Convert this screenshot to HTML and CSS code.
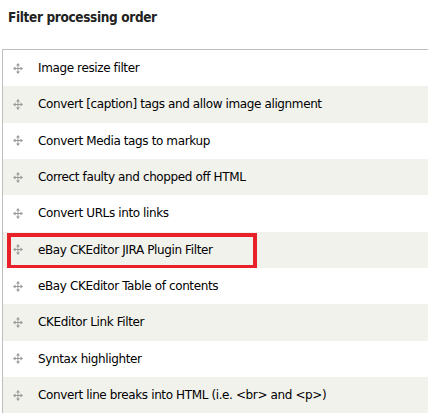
FILE: index.html
```html
<!DOCTYPE html>
<html>
<head>
<meta charset="utf-8">
<link rel="stylesheet" href="styles.css">
</head>
<body>
<h2 class="title">Filter processing order</h2>
<div class="table">
  <div class="row"><span class="handle"><svg width="10" height="11" viewBox="0 0 10 11"><path d="M5 0 L7 2.5 H5.5 V5 H7.5 V3.5 L10 5.5 L7.5 7.5 V6 H5.5 V8.5 H7 L5 11 L3 8.5 H4.5 V6 H2.5 V7.5 L0 5.5 L2.5 3.5 V5 H4.5 V2.5 H3 Z" fill="#999"/></svg></span><span class="label">Image resize filter</span></div>
  <div class="row odd"><span class="handle"><svg width="10" height="11" viewBox="0 0 10 11"><path d="M5 0 L7 2.5 H5.5 V5 H7.5 V3.5 L10 5.5 L7.5 7.5 V6 H5.5 V8.5 H7 L5 11 L3 8.5 H4.5 V6 H2.5 V7.5 L0 5.5 L2.5 3.5 V5 H4.5 V2.5 H3 Z" fill="#999"/></svg></span><span class="label">Convert [caption] tags and allow image alignment</span></div>
  <div class="row"><span class="handle"><svg width="10" height="11" viewBox="0 0 10 11"><path d="M5 0 L7 2.5 H5.5 V5 H7.5 V3.5 L10 5.5 L7.5 7.5 V6 H5.5 V8.5 H7 L5 11 L3 8.5 H4.5 V6 H2.5 V7.5 L0 5.5 L2.5 3.5 V5 H4.5 V2.5 H3 Z" fill="#999"/></svg></span><span class="label">Convert Media tags to markup</span></div>
  <div class="row odd"><span class="handle"><svg width="10" height="11" viewBox="0 0 10 11"><path d="M5 0 L7 2.5 H5.5 V5 H7.5 V3.5 L10 5.5 L7.5 7.5 V6 H5.5 V8.5 H7 L5 11 L3 8.5 H4.5 V6 H2.5 V7.5 L0 5.5 L2.5 3.5 V5 H4.5 V2.5 H3 Z" fill="#999"/></svg></span><span class="label">Correct faulty and chopped off HTML</span></div>
  <div class="row"><span class="handle"><svg width="10" height="11" viewBox="0 0 10 11"><path d="M5 0 L7 2.5 H5.5 V5 H7.5 V3.5 L10 5.5 L7.5 7.5 V6 H5.5 V8.5 H7 L5 11 L3 8.5 H4.5 V6 H2.5 V7.5 L0 5.5 L2.5 3.5 V5 H4.5 V2.5 H3 Z" fill="#999"/></svg></span><span class="label">Convert URLs into links</span></div>
  <div class="row odd"><span class="handle"><svg width="10" height="11" viewBox="0 0 10 11"><path d="M5 0 L7 2.5 H5.5 V5 H7.5 V3.5 L10 5.5 L7.5 7.5 V6 H5.5 V8.5 H7 L5 11 L3 8.5 H4.5 V6 H2.5 V7.5 L0 5.5 L2.5 3.5 V5 H4.5 V2.5 H3 Z" fill="#999"/></svg></span><span class="label">eBay CKEditor JIRA Plugin Filter</span><span class="highlight"></span></div>
  <div class="row"><span class="handle"><svg width="10" height="11" viewBox="0 0 10 11"><path d="M5 0 L7 2.5 H5.5 V5 H7.5 V3.5 L10 5.5 L7.5 7.5 V6 H5.5 V8.5 H7 L5 11 L3 8.5 H4.5 V6 H2.5 V7.5 L0 5.5 L2.5 3.5 V5 H4.5 V2.5 H3 Z" fill="#999"/></svg></span><span class="label">eBay CKEditor Table of contents</span></div>
  <div class="row odd"><span class="handle"><svg width="10" height="11" viewBox="0 0 10 11"><path d="M5 0 L7 2.5 H5.5 V5 H7.5 V3.5 L10 5.5 L7.5 7.5 V6 H5.5 V8.5 H7 L5 11 L3 8.5 H4.5 V6 H2.5 V7.5 L0 5.5 L2.5 3.5 V5 H4.5 V2.5 H3 Z" fill="#999"/></svg></span><span class="label">CKEditor Link Filter</span></div>
  <div class="row"><span class="handle"><svg width="10" height="11" viewBox="0 0 10 11"><path d="M5 0 L7 2.5 H5.5 V5 H7.5 V3.5 L10 5.5 L7.5 7.5 V6 H5.5 V8.5 H7 L5 11 L3 8.5 H4.5 V6 H2.5 V7.5 L0 5.5 L2.5 3.5 V5 H4.5 V2.5 H3 Z" fill="#999"/></svg></span><span class="label">Syntax highlighter</span></div>
  <div class="row odd"><span class="handle"><svg width="10" height="11" viewBox="0 0 10 11"><path d="M5 0 L7 2.5 H5.5 V5 H7.5 V3.5 L10 5.5 L7.5 7.5 V6 H5.5 V8.5 H7 L5 11 L3 8.5 H4.5 V6 H2.5 V7.5 L0 5.5 L2.5 3.5 V5 H4.5 V2.5 H3 Z" fill="#999"/></svg></span><span class="label">Convert line breaks into HTML (i.e. &lt;br&gt; and &lt;p&gt;)</span></div>
</div>
</body>
</html>
```
FILE: styles.css
```css
html, body {
  margin: 0;
  padding: 0;
  background: #fff;
}
body {
  font-family: "DejaVu Sans", Verdana, sans-serif;
  color: #000;
  overflow: hidden;
}
.title {
  margin: 0;
  padding: 9px 0 0 8px;
  height: 49px;
  box-sizing: border-box;
  font-family: "DejaVu Sans Condensed", "DejaVu Sans", sans-serif;
  font-size: 13.5px;
  font-weight: bold;
  letter-spacing: -0.35px;
  color: #222;
}
.table {
  margin-left: 2px;
  border-top: 1px solid #bebebe;
  border-left: 1px solid #bebebe;
}
.row {
  position: relative;
  display: flex;
  align-items: center;
  height: 36.33px;
  background: #fff;
}
.row.odd {
  background: #f2f2ed;
}
.handle {
  display: flex;
  width: 35px;
  padding-left: 10px;
  box-sizing: border-box;
}
.label {
  font-size: 12px;
  letter-spacing: -0.38px;
}
.highlight {
  position: absolute;
  left: 4px;
  top: 1px;
  width: 250px;
  height: 36px;
  box-sizing: border-box;
  border: 4px solid #e8202a;
  pointer-events: none;
}
```
